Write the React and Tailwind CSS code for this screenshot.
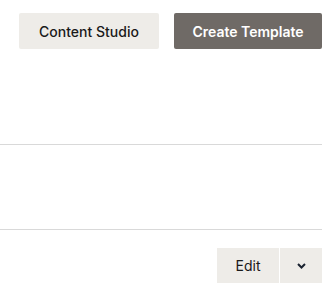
export default function App() {
    return (
        <div className="w-[331px] h-[304px] bg-white font-['Inter',sans-serif]">
            <div className="w-[322px]">
                <div className="flex justify-end gap-[15px] pt-[13px]">
                    <button className="w-[140px] h-[36px] rounded-[2px] bg-[#eeece8] text-[14px] font-medium text-[#1a1a1a]">
                        Content Studio
                    </button>
                    <button className="w-[148px] h-[36px] rounded-[2px] bg-[#6f6a66] text-[14px] font-semibold text-white">
                        Create Template
                    </button>
                </div>

                <div className="mt-[95px] h-px bg-[#d9d9d9]"></div>
                <div className="mt-[84px] h-px bg-[#d9d9d9]"></div>

                <div className="flex justify-end gap-px mt-[18px]">
                    <button className="w-[62px] h-[35px] bg-[#eeece8] text-[14px] text-[#1a1a1a]">
                        Edit
                    </button>
                    <button className="w-[42px] h-[35px] bg-[#eeece8] flex items-center justify-center">
                        <svg width="9" height="6" viewBox="0 0 9 6">
                            <path d="M1 1 L4.5 4.5 L8 1" fill="none" stroke="#1a2230" strokeWidth="2" />
                        </svg>
                    </button>
                </div>
            </div>
        </div>
    );
}
